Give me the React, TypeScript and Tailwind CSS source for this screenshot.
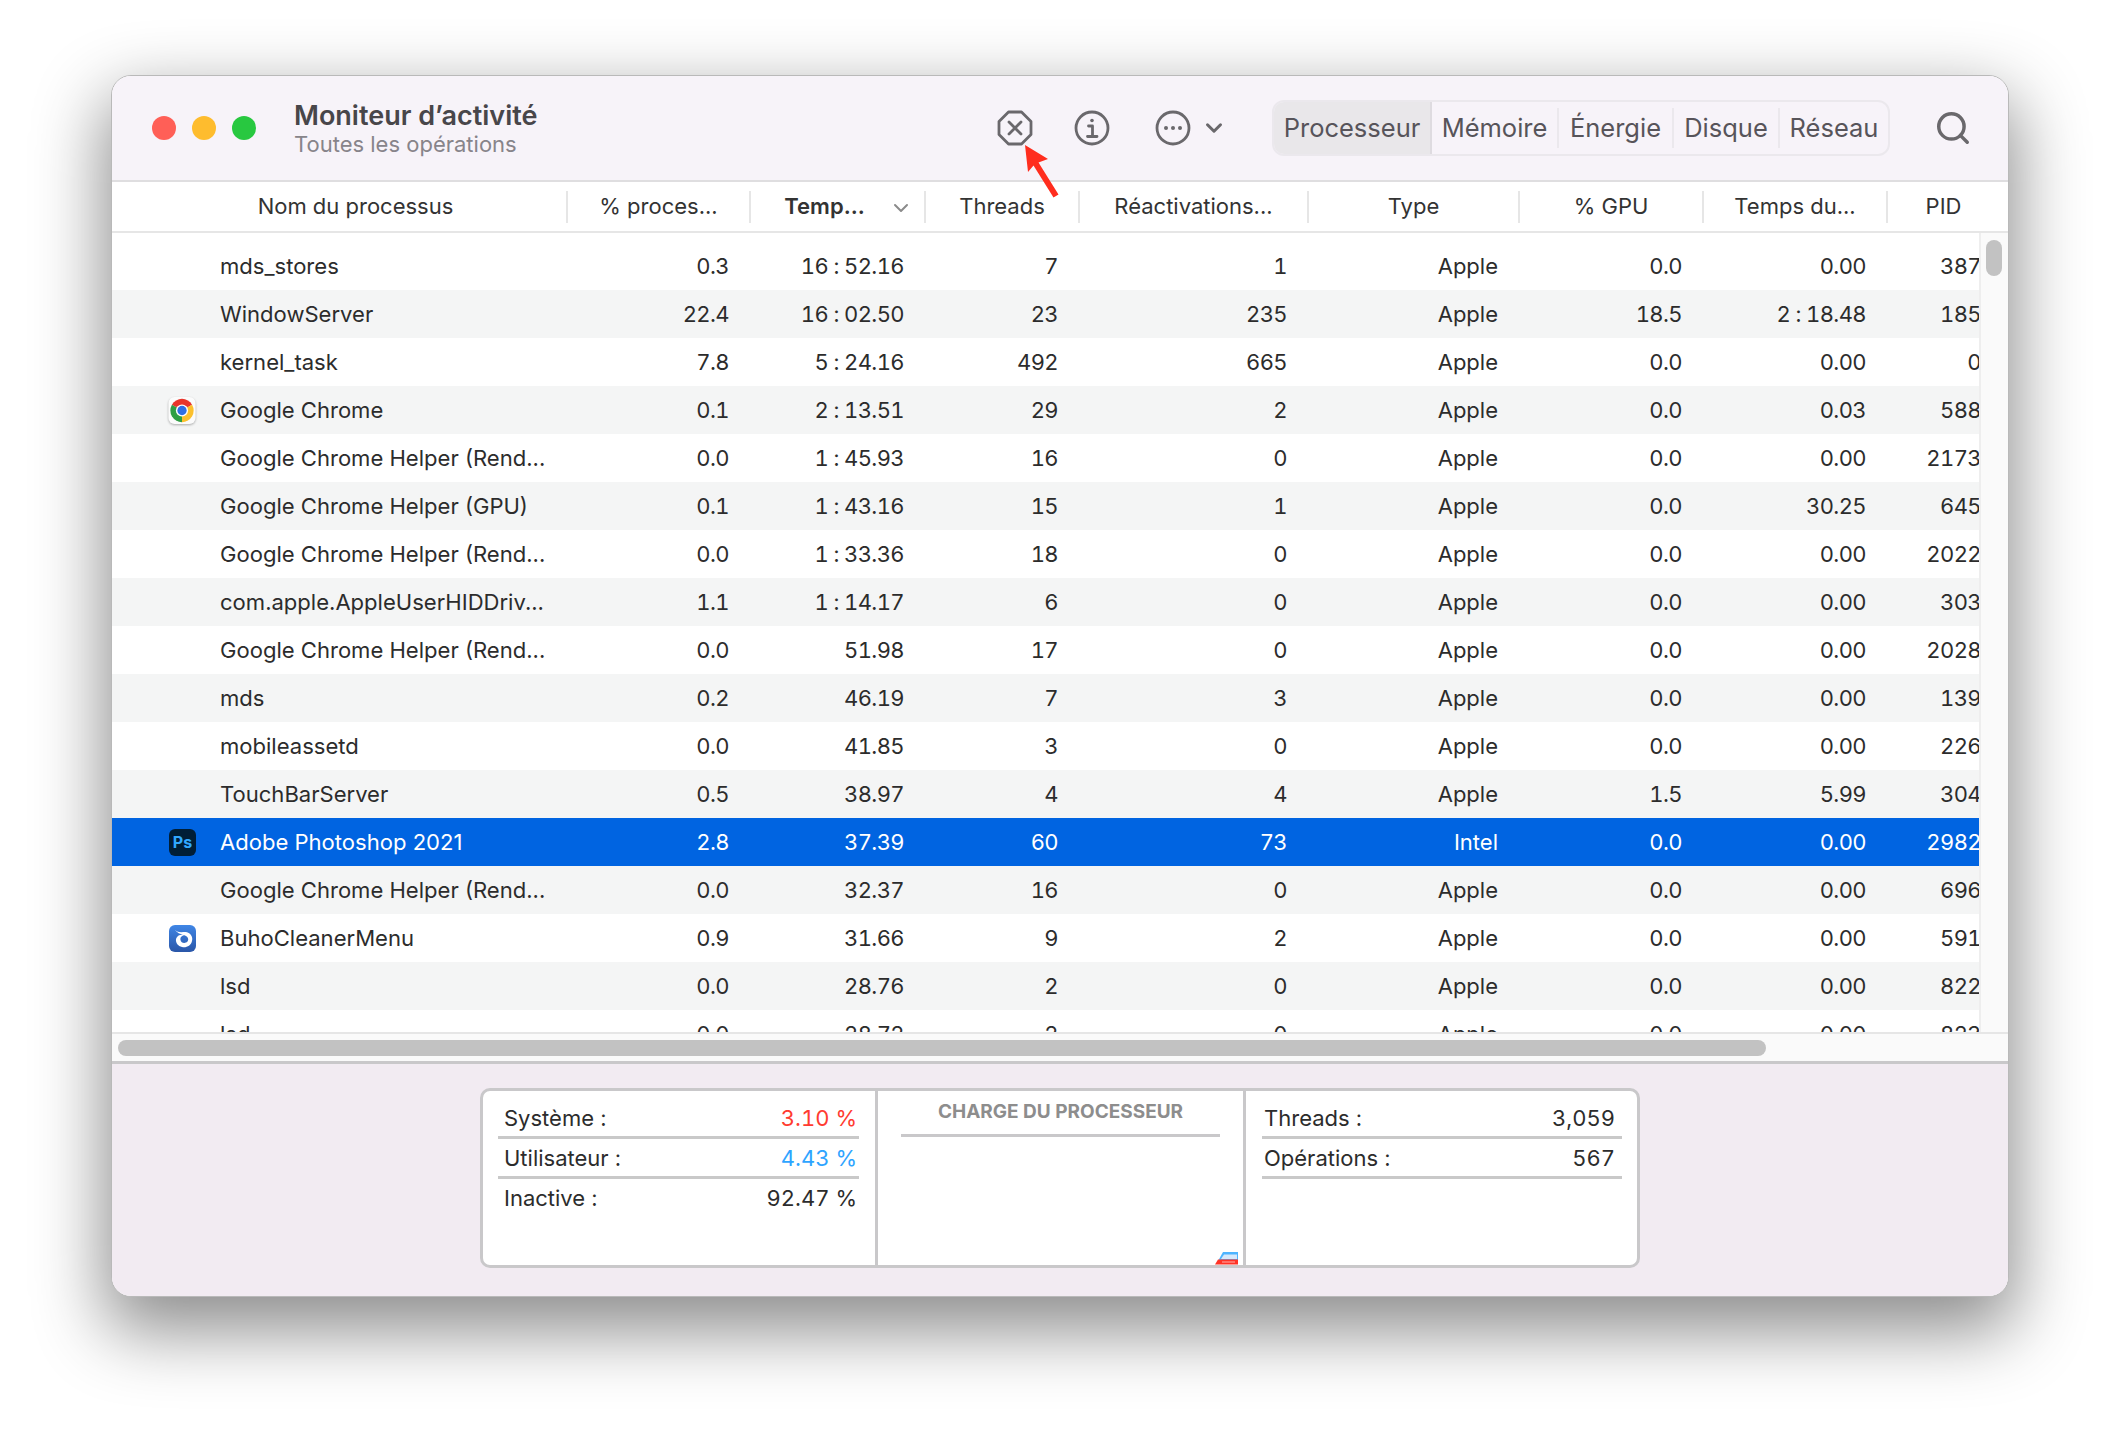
import React from 'react';
import { ChevronDown, Search } from 'lucide-react';

type IconName = 'chrome' | 'ps' | 'buho';

interface Proc {
  name: string;
  cpu: string;
  time: string;
  threads: string;
  wakes: string;
  type: string;
  gpu: string;
  gpuTime: string;
  pid: string;
  icon?: IconName;
}

const REND = 'Google Chrome Helper (Rend...';

const procs: Proc[] = [
  { name: 'mds_stores', cpu: '0.3', time: '16 : 52.16', threads: '7', wakes: '1', type: 'Apple', gpu: '0.0', gpuTime: '0.00', pid: '387' },
  { name: 'WindowServer', cpu: '22.4', time: '16 : 02.50', threads: '23', wakes: '235', type: 'Apple', gpu: '18.5', gpuTime: '2 : 18.48', pid: '185' },
  { name: 'kernel_task', cpu: '7.8', time: '5 : 24.16', threads: '492', wakes: '665', type: 'Apple', gpu: '0.0', gpuTime: '0.00', pid: '0' },
  { name: 'Google Chrome', cpu: '0.1', time: '2 : 13.51', threads: '29', wakes: '2', type: 'Apple', gpu: '0.0', gpuTime: '0.03', pid: '588', icon: 'chrome' },
  { name: REND, cpu: '0.0', time: '1 : 45.93', threads: '16', wakes: '0', type: 'Apple', gpu: '0.0', gpuTime: '0.00', pid: '2173' },
  { name: 'Google Chrome Helper (GPU)', cpu: '0.1', time: '1 : 43.16', threads: '15', wakes: '1', type: 'Apple', gpu: '0.0', gpuTime: '30.25', pid: '645' },
  { name: REND, cpu: '0.0', time: '1 : 33.36', threads: '18', wakes: '0', type: 'Apple', gpu: '0.0', gpuTime: '0.00', pid: '2022' },
  { name: 'com.apple.AppleUserHIDDriv...', cpu: '1.1', time: '1 : 14.17', threads: '6', wakes: '0', type: 'Apple', gpu: '0.0', gpuTime: '0.00', pid: '303' },
  { name: REND, cpu: '0.0', time: '51.98', threads: '17', wakes: '0', type: 'Apple', gpu: '0.0', gpuTime: '0.00', pid: '2028' },
  { name: 'mds', cpu: '0.2', time: '46.19', threads: '7', wakes: '3', type: 'Apple', gpu: '0.0', gpuTime: '0.00', pid: '139' },
  { name: 'mobileassetd', cpu: '0.0', time: '41.85', threads: '3', wakes: '0', type: 'Apple', gpu: '0.0', gpuTime: '0.00', pid: '226' },
  { name: 'TouchBarServer', cpu: '0.5', time: '38.97', threads: '4', wakes: '4', type: 'Apple', gpu: '1.5', gpuTime: '5.99', pid: '304' },
  { name: 'Adobe Photoshop 2021', cpu: '2.8', time: '37.39', threads: '60', wakes: '73', type: 'Intel', gpu: '0.0', gpuTime: '0.00', pid: '2982', icon: 'ps' },
  { name: REND, cpu: '0.0', time: '32.37', threads: '16', wakes: '0', type: 'Apple', gpu: '0.0', gpuTime: '0.00', pid: '696' },
  { name: 'BuhoCleanerMenu', cpu: '0.9', time: '31.66', threads: '9', wakes: '2', type: 'Apple', gpu: '0.0', gpuTime: '0.00', pid: '591', icon: 'buho' },
  { name: 'lsd', cpu: '0.0', time: '28.76', threads: '2', wakes: '0', type: 'Apple', gpu: '0.0', gpuTime: '0.00', pid: '822' },
  { name: 'lsd', cpu: '0.0', time: '28.72', threads: '2', wakes: '0', type: 'Apple', gpu: '0.0', gpuTime: '0.00', pid: '823' },
];

const SELECTED = 12;

const ChromeIcon = () => (
  <svg width="28" height="29" viewBox="0 0 30 30" className="drop-shadow-[0_1px_1px_rgba(0,0,0,0.3)]">
    <rect x="0.5" y="0.5" width="29" height="29" rx="6.500" fill="#fbfbfb" />
    <path d="M15 15 L4.200 8.750 A 12.500 12.500 0 0 1 25.800 8.750 Z" fill="#e8352b" />
    <path d="M15 15 L25.800 8.750 A 12.500 12.500 0 0 1 15 27.500 Z" fill="#fbc02d" />
    <path d="M15 15 L15 27.500 A 12.500 12.500 0 0 1 4.200 8.750 Z" fill="#2f9e44" />
    <circle cx="15" cy="15" r="6.500" fill="#fff" />
    <circle cx="15" cy="15" r="5" fill="#2f6fe4" />
  </svg>
);

const PsIcon = () => (
  <div className="w-[27px] h-[27px] rounded-[6px] bg-[#001e36] flex items-center justify-center">
    <span className="text-[16px] leading-none font-bold text-[#31a8ff]">Ps</span>
  </div>
);

const BuhoIcon = () => (
  <svg width="27" height="27" viewBox="0 0 27 27">
    <defs>
      <linearGradient id="buho" x1="0" y1="0" x2="0" y2="1">
        <stop offset="0" stopColor="#3f86e6" />
        <stop offset="1" stopColor="#2a56a8" />
      </linearGradient>
    </defs>
    <rect width="27" height="27" rx="6" fill="url(#buho)" />
    <path d="M6 5 C9 8 13 7 17 7 C22 8 24 12 23 16 C22 21 17 23 13 22 C9 21 6.500 18 7 14 C8 10 12 9 15 10 C13 11 11 12 11.500 15 C12 18 16 19 18.500 16.500 C20 14.500 19 12 17 11 C13 9 9 9 6 5 Z" fill="#fff" />
  </svg>
);

const rowIcons: Record<IconName, React.ReactNode> = {
  chrome: <ChromeIcon />,
  ps: <PsIcon />,
  buho: <BuhoIcon />,
};

const NumCell: React.FC<{ value: string; last?: boolean }> = ({ value, last }) => (
  <div className={`text-right tabular-nums tracking-[-0.6px] ${last ? '' : 'pr-[21px]'}`}>{value}</div>
);

const ProcRow: React.FC<{ proc: Proc; index: number }> = ({ proc, index }) => {
  const selected = index === SELECTED;
  const bg = selected ? 'bg-[#0064e1] text-white' : index % 2 === 1 ? 'bg-[#f4f5f5] text-[#2c2c2c]' : 'bg-white text-[#2c2c2c]';
  return (
    <div className={`grid grid-cols-[455px_183px_175px_154px_229px_211px_184px_184px_94px] w-[1869px] h-[48px] shrink-0 items-center whitespace-nowrap text-[22px] ${bg}`}>
      <div className="flex items-center">
        <div className="w-[108px] flex justify-end pr-[24px]">{proc.icon && rowIcons[proc.icon]}</div>
        <span className="text-[22.05px] pt-[2px]">{proc.name}</span>
      </div>
      <NumCell value={proc.cpu} />
      <NumCell value={proc.time} />
      <NumCell value={proc.threads} />
      <NumCell value={proc.wakes} />
      <div className="text-right pr-[21px]">{proc.type}</div>
      <NumCell value={proc.gpu} />
      <NumCell value={proc.gpuTime} />
      <NumCell value={proc.pid} last />
    </div>
  );
};

const HeaderCell: React.FC<{ label: string; bold?: boolean; divider?: boolean; className?: string }> = ({ label, bold, divider = true, className = '' }) => (
  <div className={`flex items-center justify-center h-[32px] text-[22px] text-[#333333] whitespace-nowrap ${divider ? 'border-r-2 border-[#e6e6e6]' : ''} ${bold ? 'font-semibold' : ''} ${className}`}>
    {label}
  </div>
);

const StatRow: React.FC<{ label: string; value: string; valueClass?: string; line?: boolean; className?: string }> = ({ label, value, valueClass = 'text-[#2c2c2c]', line = true, className = '' }) => (
  <div className={`h-[40px] flex items-center justify-between pt-[2px] text-[22px] text-[#2c2c2c] border-b-[3px] ${line ? 'border-[#c9c9c9]' : 'border-transparent'} ${className}`}>
    <span>{label}</span>
    <span className={`tabular-nums ${valueClass}`}>{value}</span>
  </div>
);

const Tab: React.FC<{ label: string; active?: boolean; last?: boolean; className: string }> = ({ label, active, last, className }) => (
  <div className={`flex items-center justify-center text-[25.5px] text-[#57545a] ${active ? 'h-full bg-[#e9e7ea] rounded-l-[10px] border-r-2 border-[#dedbe0]' : last ? 'h-full' : 'border-r-2 border-[#ebe8ed] h-[40px]'} ${className}`}>
    {label}
  </div>
);

export default function App() {
  return (
    <div className="relative w-[2120px] h-[1444px] bg-white pt-[75px] pl-[111px] overflow-hidden font-['Inter',sans-serif]">
      <div className="relative w-[1898px] h-[1222px] flex flex-col rounded-[20px] overflow-hidden border border-[#b9b9b9] shadow-[0_28px_70px_6px_rgba(0,0,0,0.45)] bg-white">
        {/* title bar */}
        <div className="h-[106px] shrink-0 flex items-center bg-[#f7f3f9] border-b-2 border-[#dfdee0]">
          <div className="flex items-center gap-[16px] ml-[40px] w-[142px]">
            <div className="w-[24px] h-[24px] rounded-full bg-[#ff5f57]" />
            <div className="w-[24px] h-[24px] rounded-full bg-[#febc2e]" />
            <div className="w-[24px] h-[24px] rounded-full bg-[#28c840]" />
          </div>
          <div className="flex flex-col w-[703px] pt-[1px]">
            <div className="text-[27px] leading-[30px] font-semibold text-[#48464a]">Moniteur d’activité</div>
            <div className="text-[22px] leading-[26px] text-[#87848a]">Toutes les opérations</div>
          </div>
          <svg width="36" height="36" viewBox="0 0 36 36" fill="none" stroke="#6a686c" strokeWidth="2.800" className="mr-[41px]">
            <path d="M11.500 2 H24.500 L34 11.500 V24.500 L24.500 34 H11.500 L2 24.500 V11.500 Z" strokeLinejoin="round" />
            <path d="M12 12 L24 24 M24 12 L12 24" strokeLinecap="round" />
          </svg>
          <svg width="36" height="36" viewBox="0 0 36 36" fill="none" stroke="#6a686c" strokeWidth="2.800" className="mr-[45px]">
            <circle cx="18" cy="18" r="16" />
            <circle cx="18" cy="10.500" r="1.800" fill="#6a686c" stroke="none" />
            <path d="M14.500 16 H18.500 V26 M13.500 26.500 H23" strokeLinecap="round" strokeLinejoin="round" />
          </svg>
          <svg width="36" height="36" viewBox="0 0 36 36" fill="none" stroke="#6a686c" strokeWidth="2.800" className="mr-[10px]">
            <circle cx="18" cy="18" r="16" />
            <circle cx="11" cy="18" r="2" fill="#6a686c" stroke="none" />
            <circle cx="18" cy="18" r="2" fill="#6a686c" stroke="none" />
            <circle cx="25" cy="18" r="2" fill="#6a686c" stroke="none" />
          </svg>
          <ChevronDown size={26} strokeWidth={2.800} className="text-[#6a686c] mr-[45px]" />
          <div className="flex items-center w-[618px] h-[56px] rounded-[12px] border-2 border-[#ebe8ed]">
            <Tab label="Processeur" active className="w-[158px]" />
            <Tab label="Mémoire" className="w-[127px]" />
            <Tab label="Énergie" className="w-[115px]" />
            <Tab label="Disque" className="w-[106px]" />
            <Tab label="Réseau" last className="w-[108px]" />
          </div>
          <Search size={38} strokeWidth={2.200} className="text-[#6a686c] ml-[44px]" />
        </div>

        {/* column headers */}
        <div className="h-[51px] shrink-0 flex items-center bg-white border-b-2 border-[#e6e6e6]">
          <HeaderCell label="Nom du processus" className="w-[456px] pl-[33px]" />
          <HeaderCell label="% proces..." className="w-[183px]" />
          <HeaderCell label="Temp..." bold className="w-[175px] pr-[26px]" />
          <HeaderCell label="Threads" className="w-[154px]" />
          <HeaderCell label="Réactivations..." className="w-[229px]" />
          <HeaderCell label="Type" className="w-[211px]" />
          <HeaderCell label="% GPU" className="w-[184px]" />
          <HeaderCell label="Temps du..." className="w-[184px]" />
          <HeaderCell label="PID" divider={false} className="w-[111px]" />
        </div>

        {/* process list + scrollbars */}
        <div className="h-[831px] shrink-0 flex flex-col bg-[#fafafa] border-b-[3px] border-[#c9c8ca]">
          <div className="flex h-[801px] shrink-0 border-b-2 border-[#e6e6e6]">
            <div className="w-[1867px] shrink-0 overflow-hidden bg-white pt-[9px] flex flex-col">
              {procs.map((proc, i) => (
                <ProcRow key={`${proc.pid}-${i}`} proc={proc} index={i} />
              ))}
            </div>
            <div className="flex-1 border-l-2 border-[#eeeeee] pt-[7px] pl-[5px]">
              <div className="w-[16px] h-[36px] rounded-full bg-[#c2c2c2]" />
            </div>
          </div>
          <div className="pt-[6px] pl-[6px]">
            <div className="w-[1648px] h-[16px] rounded-full bg-[#c2c2c2]" />
          </div>
        </div>

        {/* footer */}
        <div className="flex-1 flex justify-center pt-[24px] bg-[#f2ebf2]">
          <div className="flex w-[1160px] h-[180px] bg-white rounded-[10px] border-[3px] border-[#c9c8ca]">
            <div className="w-[395px] shrink-0 border-r-[3px] border-[#c9c8ca] pl-[15px] pr-[16px] pt-[8px]">
              <StatRow label="Système :" value="3.10 %" valueClass="text-[#ff3b30]" className="pl-[6px] pr-[2px]" />
              <StatRow label="Utilisateur :" value="4.43 %" valueClass="text-[#2ea4ff]" className="pl-[6px] pr-[2px]" />
              <StatRow label="Inactive :" value="92.47 %" line={false} className="pl-[6px] pr-[2px]" />
            </div>
            <div className="relative w-[368px] shrink-0 border-r-[3px] border-[#c9c8ca] px-[23px]">
              <div className="h-[46px] flex items-center justify-center border-b-[3px] border-[#c9c8ca] text-[19px] font-bold text-[#8d8d8d] pb-[1px]">CHARGE DU PROCESSEUR</div>
              <svg width="24" height="14" viewBox="0 0 24 14" className="absolute right-[4px] bottom-0">
                <path d="M8 1 H23 V10 H3 Z" fill="#4db4ff" />
                <path d="M9 3.500 H22 V8 H6 Z" fill="#d5e8fb" />
                <path d="M3 8.500 H23 V13.500 H0 Z" fill="#ff3326" />
                <path d="M7 10.500 H20 V11.500 H7 Z" fill="#ffb0a8" />
              </svg>
            </div>
            <div className="flex-1 pl-[16px] pr-[15px] pt-[8px]">
              <StatRow label="Threads :" value="3,059" className="pl-[2px] pr-[7px]" />
              <StatRow label="Opérations :" value="567" className="pl-[2px] pr-[7px]" />
            </div>
          </div>
        </div>

        {/* sort chevron */}
        <ChevronDown size={24} strokeWidth={2} className="absolute left-[777px] top-[120px] text-[#8b8b8b]" />
        {/* annotation arrow */}
        <svg width="50" height="66" viewBox="0 0 50 66" className="absolute left-[909px] top-[64px]">
          <path d="M4 5 L27 19 L17.500 22.400 L37.500 54.400 L32.500 57.600 L12.500 25.600 L7 32 Z" fill="#ff2d1e" />
        </svg>
      </div>
    </div>
  );
}
